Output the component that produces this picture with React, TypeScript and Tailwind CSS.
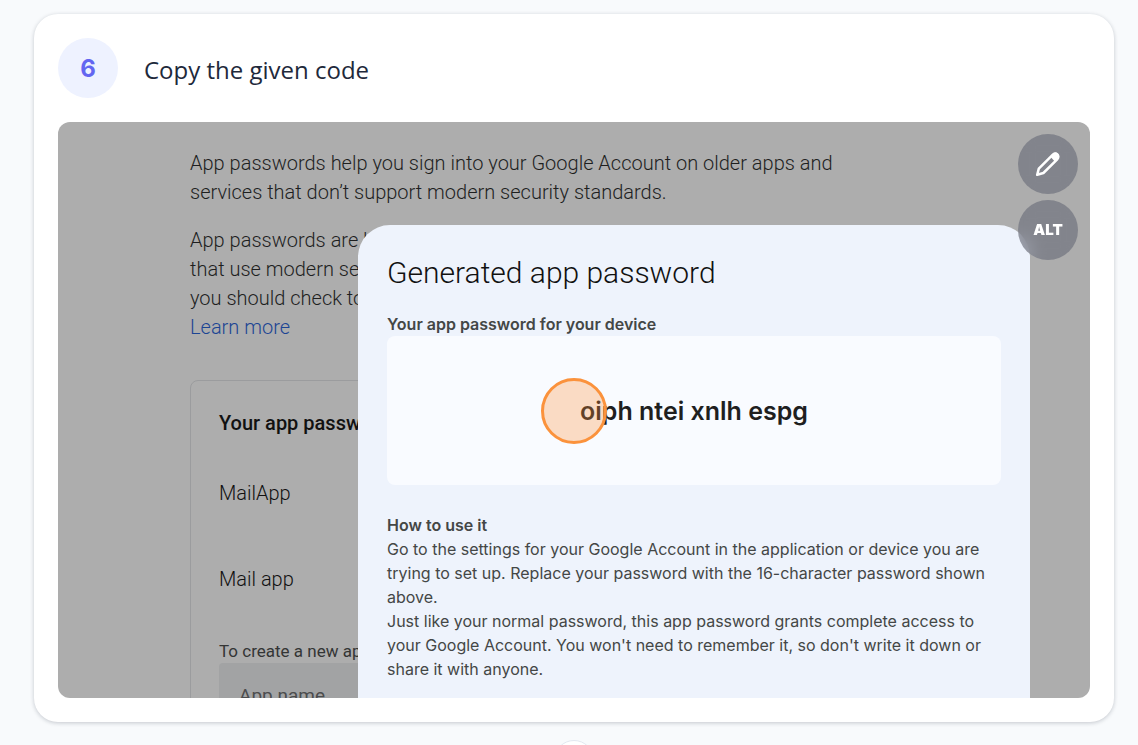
import type { ReactNode } from "react";

function PencilIcon() {
  return (
    <svg viewBox="0 0 28 28" className="size-7" aria-hidden="true">
      <path
        d="M3.2 24.8 4.8 18.6 18.6 4.8 C20.2 3.2 22 3.2 23.3 4.5 C24.6 5.8 24.8 7.8 23.2 9.4 L9.4 23 Z"
        fill="none"
        stroke="currentColor"
        strokeWidth="2.5"
        strokeLinejoin="round"
      />
      <path
        d="M16.2 6.6 18.6 4 C20.2 2.2 22.4 2.2 24 3.8 C25.6 5.4 25.6 7.6 23.8 9.4 L21.2 12 Z"
        fill="currentColor"
      />
    </svg>
  );
}

function RoundButton({ label, children }: { label: string; children: ReactNode }) {
  return (
    <button
      type="button"
      aria-label={label}
      className="flex size-15 items-center justify-center rounded-full bg-[#575b6b]/50 font-[Inter,sans-serif] text-[15px] font-black text-white backdrop-blur-sm"
    >
      {children}
    </button>
  );
}

function PasswordPage() {
  return (
    <div className="pt-[27px] pl-33 text-xl/[29px] font-light whitespace-nowrap text-[#1e1f1f]">
      <p>
        App passwords help you sign into your Google Account on older apps and
        <br />
        services that don’t support modern security standards.
      </p>
      <p className="mt-[19px]">
        App passwords are l
        <br />
        that use modern se
        <br />
        you should check to
        <br />
        <a href="#learn" className="text-[#1c4594]">
          Learn more
        </a>
      </p>
      <section className="mt-[38px] h-100 w-100 rounded-lg border border-[#9b9c9e] px-7 pt-7 text-[#111]">
        <h3 className="font-medium">Your app passw</h3>
        <p className="mt-[41px]">MailApp</p>
        <p className="mt-[57px]">Mail app</p>
        <label htmlFor="app-name" className="mt-[45px] block text-[17px]/6 font-normal text-[#343535]">
          To create a new ap
        </label>
        <input
          id="app-name"
          placeholder="App name"
          className="block h-16 w-full rounded-t-sm bg-[#a2a3a4] px-5 text-[19px] font-normal placeholder:text-[#4b4c4d]"
        />
      </section>
    </div>
  );
}

function PasswordDialog() {
  return (
    <div
      role="dialog"
      aria-labelledby="dialog-title"
      className="absolute top-[103px] right-15 bottom-0 left-75 rounded-t-[32px] bg-[#eef3fc] px-[29px] pt-7 font-[Inter,sans-serif] text-base/6 whitespace-nowrap text-[#444746]"
    >
      <h2 id="dialog-title" className="font-[Roboto,sans-serif] text-[30px]/10 font-light text-[#111]">
        Generated app password
      </h2>
      <h3 className="mt-[19px] font-semibold">Your app password for your device</h3>
      <div className="relative flex h-[149px] items-center justify-center rounded-lg bg-[#f9fbff] text-[25px] font-semibold text-[#1f1f1f]">
        oiph ntei xnlh espg
        <span className="absolute left-[154px] size-[66px] rounded-full border-3 border-[#fb923c] bg-[#fb923c]/30" />
      </div>
      <h3 className="mt-7 font-semibold">How to use it</h3>
      <p>
        Go to the settings for your Google Account in the application or device you are
        <br />
        trying to set up. Replace your password with the 16-character password shown
        <br />
        above.
      </p>
      <p>
        Just like your normal password, this app password grants complete access to
        <br />
        your Google Account. You won't need to remember it, so don't write it down or
        <br />
        share it with anyone.
      </p>
    </div>
  );
}

export default function App() {
  return (
    <main className="h-screen overflow-hidden bg-[#f8fafc] pt-3.5 pr-6 pl-[34px] font-[Roboto,sans-serif]">
      <article className="rounded-3xl bg-white p-6 shadow-[0_1px_4px_rgba(15,23,42,0.22)]">
        <header className="flex items-center gap-[26px]">
          <span className="flex size-15 items-center justify-center rounded-full bg-[#eef2ff] pt-0.5 font-[Inter,sans-serif] text-2xl font-bold text-[#6366f1]">
            6
          </span>
          <h1 className="pt-1 font-[Open_Sans,sans-serif] text-2xl font-normal text-[#1e293b]">
            Copy the given code
          </h1>
        </header>
        <div className="relative mt-6 h-144 overflow-hidden rounded-xl bg-[#adadad]">
          <PasswordPage />
          <PasswordDialog />
          <div className="absolute top-3 right-3 flex flex-col gap-1.5">
            <RoundButton label="Edit image">
              <PencilIcon />
            </RoundButton>
            <RoundButton label="Alternative text">ALT</RoundButton>
          </div>
        </div>
      </article>
      <div className="mx-auto mt-[18px] size-10 rounded-full border border-[#e2e8f0] bg-white" />
    </main>
  );
}
